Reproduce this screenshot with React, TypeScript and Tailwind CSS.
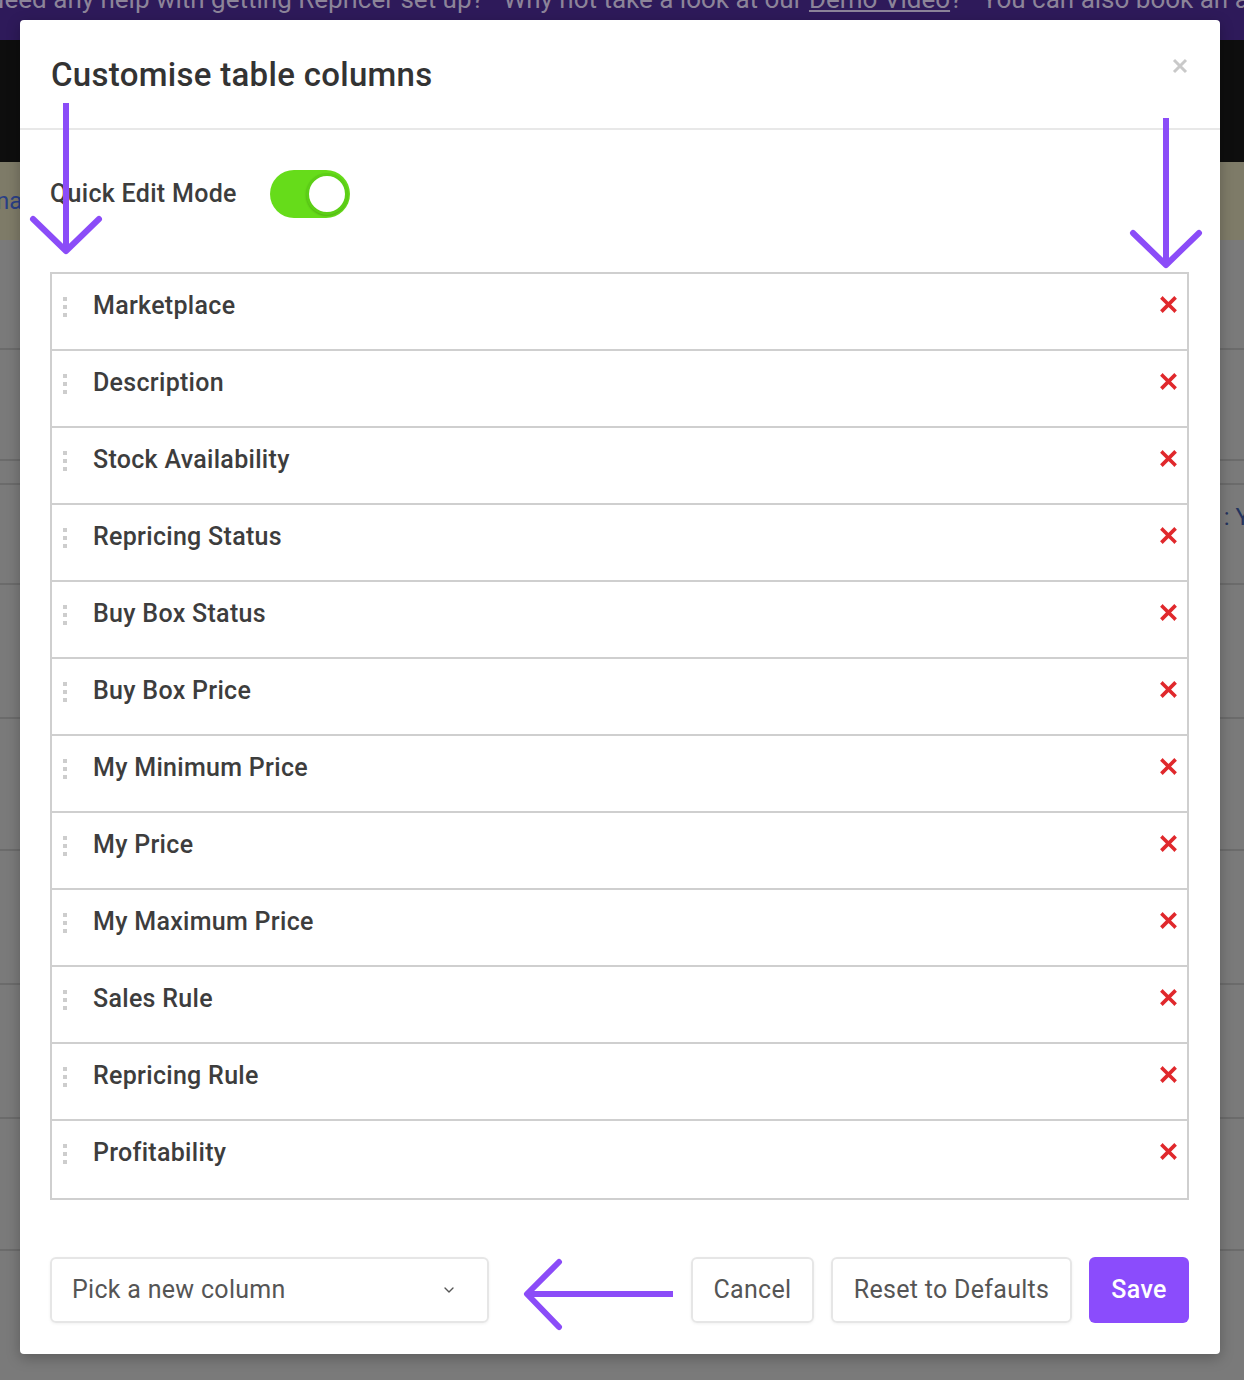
import { ChevronDown } from "lucide-react";

const columns = [
  "Marketplace",
  "Description",
  "Stock Availability",
  "Repricing Status",
  "Buy Box Status",
  "Buy Box Price",
  "My Minimum Price",
  "My Price",
  "My Maximum Price",
  "Sales Rule",
  "Repricing Rule",
  "Profitability",
];

// background page rows (dimmed behind the modal)
const bgRows = [110, 111, 24, 100, 134, 132, 134, 134, 132];

function DragHandle() {
  return (
    <div className="flex flex-col gap-[4px] pt-[1px]">
      <span className="block w-[4px] h-[4px] bg-[#cdcdcd]"></span>
      <span className="block w-[4px] h-[4px] bg-[#cdcdcd]"></span>
      <span className="block w-[4px] h-[4px] bg-[#cdcdcd]"></span>
    </div>
  );
}

function RemoveIcon() {
  return (
    <svg width="17" height="17" viewBox="0 0 16 16">
      <path d="M2.5 2.5 L13.5 13.5 M13.5 2.5 L2.5 13.5" stroke="#e0282c" strokeWidth="3.4" strokeLinecap="square" />
    </svg>
  );
}

function Arrows() {
  return (
    <svg className="absolute inset-0 pointer-events-none" width="1244" height="1380" viewBox="0 0 1244 1380">
      <g stroke="#8b4cf8" strokeWidth="6" fill="none">
        <path d="M66 103 L66 248" />
        <path d="M33 219 L66 251 L99 219" strokeLinecap="round" strokeLinejoin="round" />
        <path d="M1166 118 L1166 263" />
        <path d="M1133 233 L1166 265 L1199 233" strokeLinecap="round" strokeLinejoin="round" />
        <path d="M673 1294 L530 1294" />
        <path d="M559 1262 L527 1294 L559 1327" strokeLinecap="round" strokeLinejoin="round" />
      </g>
    </svg>
  );
}

export default function App() {
  return (
    <div className="relative w-[1244px] h-[1380px] overflow-hidden bg-[#7a7a7a] font-['Roboto',sans-serif]">
      {/* dimmed page */}
      <div className="flex flex-col">
        <div className="h-[40px] bg-[#2e1a5a] overflow-hidden whitespace-nowrap">
          <p className="-mt-[17px] -ml-[14px] text-[26px] leading-[32px] text-[#8c8499]">
            Need any help with getting Repricer set up? &nbsp; Why not take a look at our{" "}
            <span className="underline">Demo Video</span>? &nbsp; You can also book an appointment
          </p>
        </div>
        <div className="h-[122px] bg-[#0e0e0e]"></div>
        <div className="h-[78px] bg-[#7e7b68] flex items-center">
          <span className="-ml-[4px] text-[24px] text-[#2a3f86]">na</span>
        </div>
        {bgRows.map((h, i) => (
          <div key={i} className="border-b-2 border-[#6b6b6b] flex items-start justify-end pt-[14px]" style={{ height: h }}>
            {i === 3 && <span className="mr-[-6px] text-[24px] text-[#24345e]">: Y</span>}
          </div>
        ))}
      </div>

      {/* modal */}
      <div className="absolute left-[20px] top-[20px] w-[1200px] h-[1334px] bg-white rounded-[4px] shadow-[0_4px_14px_rgba(0,0,0,0.25)] flex flex-col">
        <div className="h-[110px] border-b-2 border-[#e8e8e8] flex items-start justify-between pl-[31px] pr-[32px]">
          <h2 className="pt-[35px] text-[33px] leading-[40px] tracking-[0.3px] font-medium text-[#333]">Customise table columns</h2>
          <svg className="mt-[38px]" width="16" height="16" viewBox="0 0 16 16">
            <path d="M2 2 L14 14 M14 2 L2 14" stroke="#c9c9c9" strokeWidth="3" />
          </svg>
        </div>

        <div className="flex flex-col px-[30px] pt-[40px]">
          <div className="flex items-center gap-[33px] h-[48px]">
            <span className="text-[25px] tracking-[0.3px] font-medium text-[#3d3d3d]">Quick Edit Mode</span>
            <div className="w-[80px] h-[48px] rounded-full bg-[#66dc1a] flex items-center justify-end pr-[2px]">
              <div className="w-[42px] h-[42px] rounded-full bg-white border-[3px] border-[#5ccf16] shadow-[0_1px_2px_rgba(0,0,0,0.2)]"></div>
            </div>
          </div>

          <div className="mt-[54px] border-2 border-[#cfcfcf] w-[1139px]">
            {columns.map((c, i) => (
              <div
                key={c}
                className={`h-[77px] flex items-start pl-[11px] pr-[10px] pt-[20px] ${i < columns.length - 1 ? "border-b-2 border-[#cfcfcf]" : ""}`}
              >
                <div className="w-[30px] pt-[2px]"><DragHandle /></div>
                <span className="flex-1 text-[25px] leading-[26px] tracking-[0.3px] font-medium text-[#3d3d3d] -mt-[1px]">{c}</span>
                <div className="pt-[2px]"><RemoveIcon /></div>
              </div>
            ))}
          </div>

          <div className="mt-[57px] flex items-center justify-between w-[1139px]">
            <div className="w-[439px] h-[66px] border-2 border-[#e6e6e6] rounded-[6px] shadow-[0_1px_3px_rgba(0,0,0,0.06)] flex items-center justify-between pl-[20px] pr-[30px]">
              <span className="text-[25px] tracking-[0.3px] text-[#555]">Pick a new column</span>
              <ChevronDown size={16} strokeWidth={2} className="text-[#555]" />
            </div>
            <div className="flex items-center gap-[17px]">
              <button className="w-[123px] h-[66px] border-2 border-[#e6e6e6] rounded-[6px] shadow-[0_1px_3px_rgba(0,0,0,0.06)] text-[25px] tracking-[0.3px] text-[#555]">Cancel</button>
              <button className="w-[241px] h-[66px] border-2 border-[#e6e6e6] rounded-[6px] shadow-[0_1px_3px_rgba(0,0,0,0.06)] text-[25px] tracking-[0.3px] text-[#555]">Reset to Defaults</button>
              <button className="w-[100px] h-[66px] rounded-[6px] bg-[#8b4cfc] text-[25px] tracking-[0.3px] font-medium text-white">Save</button>
            </div>
          </div>
        </div>
      </div>

      <Arrows />
    </div>
  );
}
